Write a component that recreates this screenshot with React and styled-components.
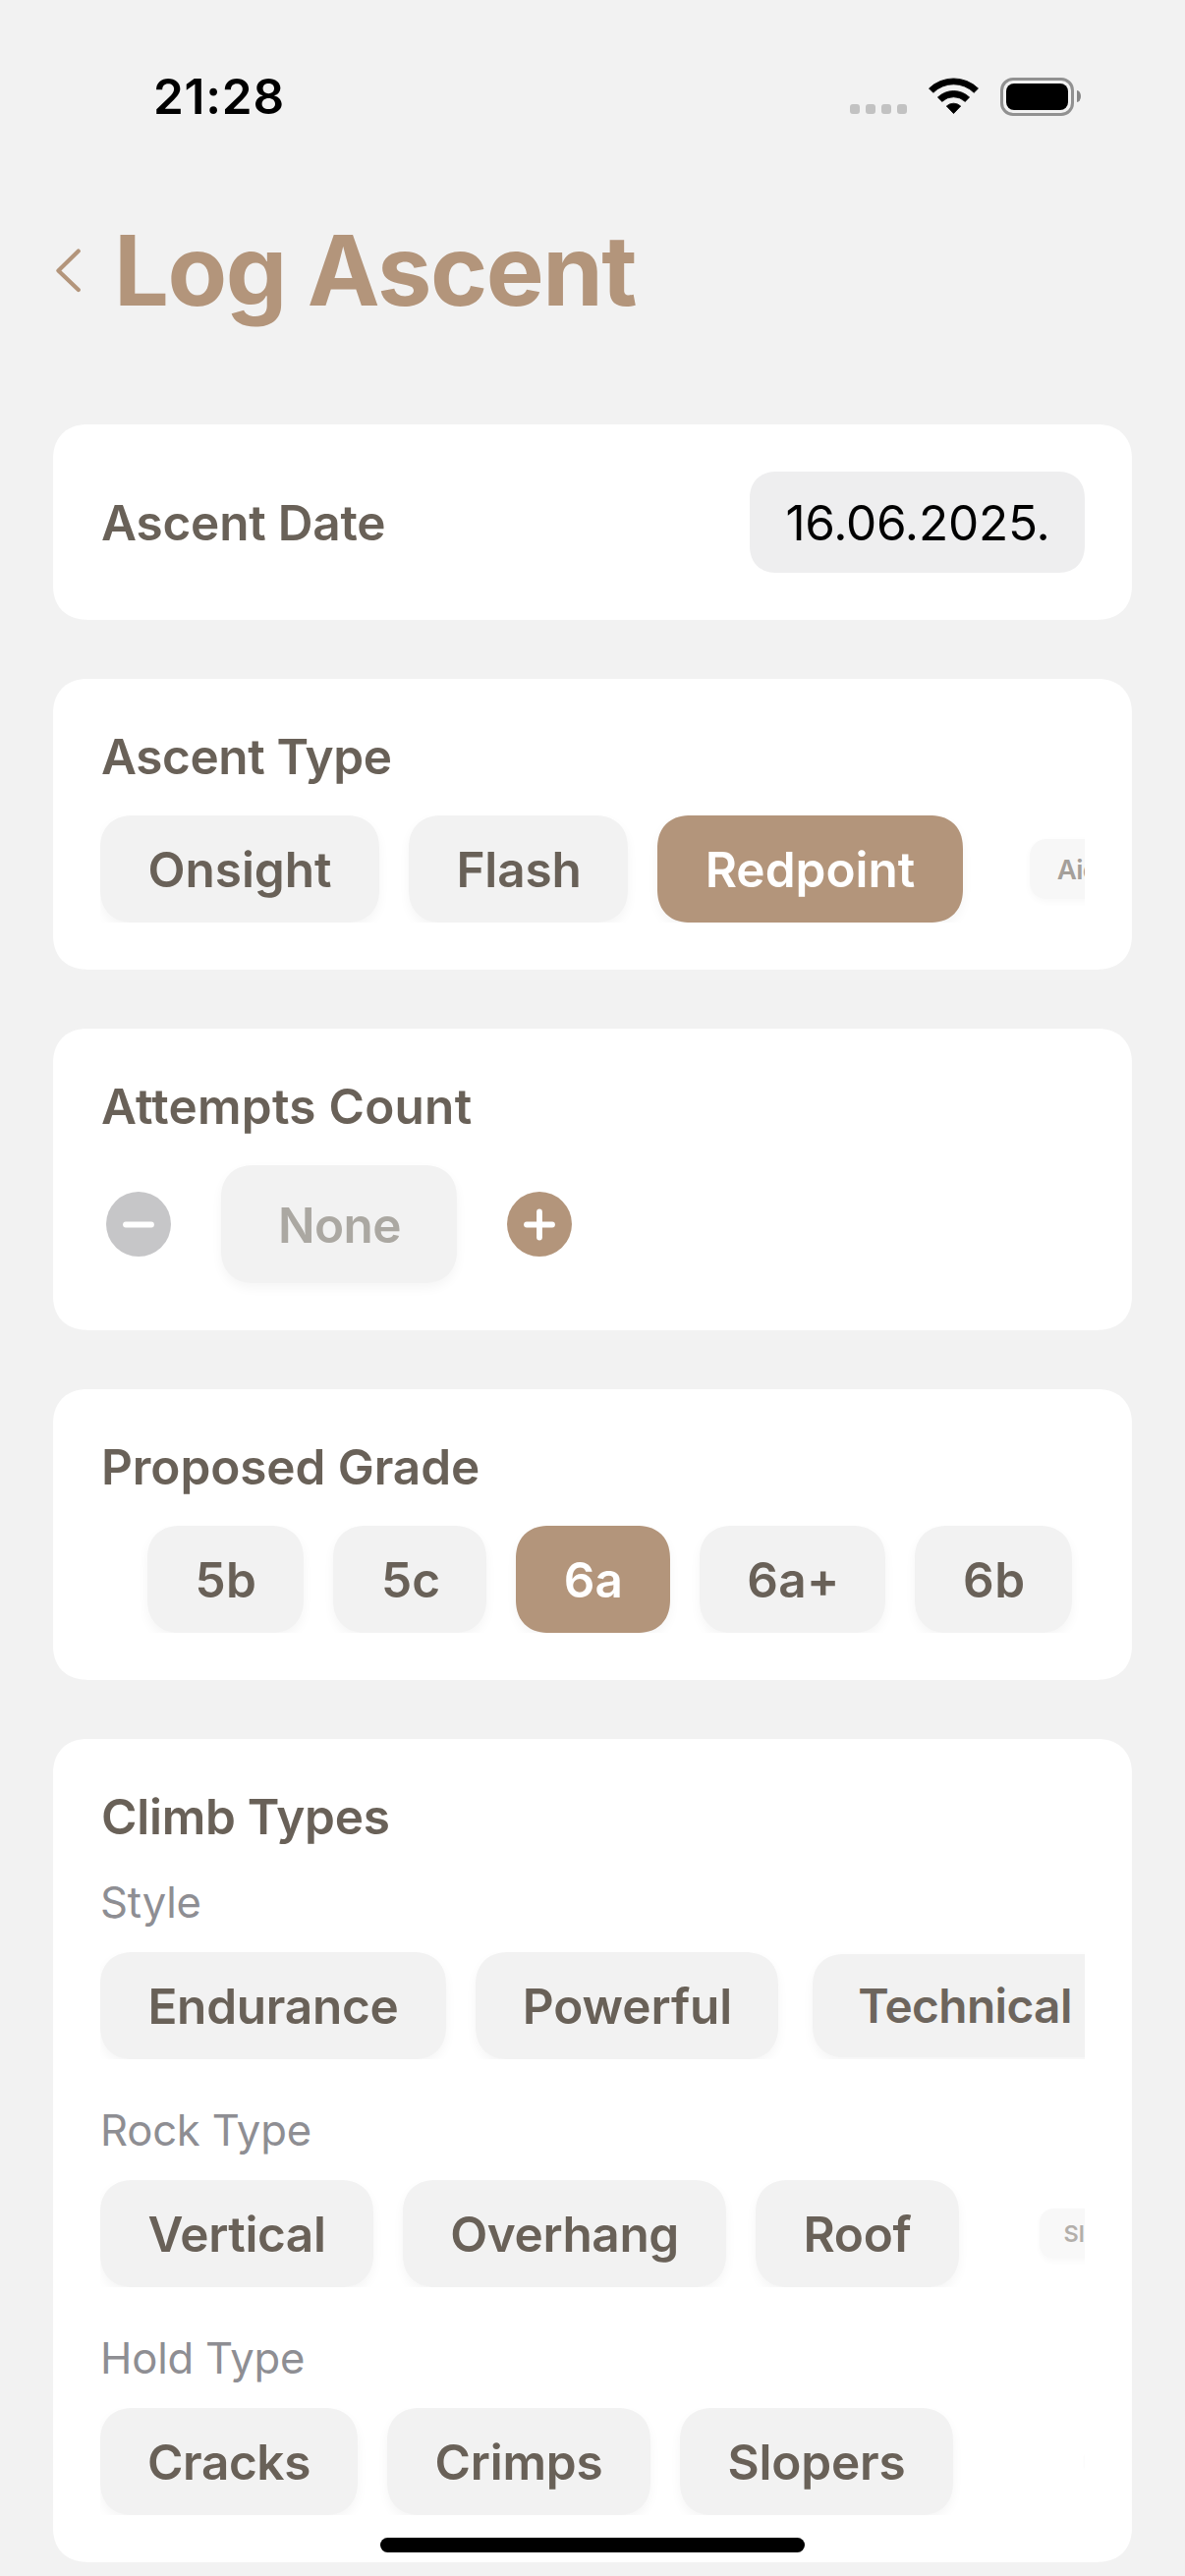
import React from "react";
import styled, { createGlobalStyle } from "styled-components";

const color = {
  page: "#f2f2f2",
  card: "#ffffff",
  chip: "#f2f2f2",
  text: "#696158",
  accent: "#b3957b",
  label: "#8e8e93",
  disabled: "#c6c6c8",
};

const GlobalStyle = createGlobalStyle`
  *, *::before, *::after { box-sizing: border-box; }
  body {
    margin: 0;
    background: ${color.page};
    font-family: Inter, "Liberation Sans", sans-serif;
    -webkit-font-smoothing: antialiased;
  }
`;

const Screen = styled.div`
  position: relative;
  display: flex;
  flex-direction: column;
  width: 1206px;
  height: 2622px;
  overflow: hidden;
  background: ${color.page};
`;

const StatusBar = styled.header`
  display: flex;
  align-items: center;
  justify-content: space-between;
  height: 196px;
  padding: 0 106px 0 156px;
`;

const Clock = styled.span`
  font-size: 49.5px;
  font-weight: 600;
  line-height: 60px;
  letter-spacing: 0.77px;
  color: #000;
`;

const StatusIcons = styled.div`
  display: flex;
  align-items: center;
  gap: 22px;
`;

const SignalDots = styled.div`
  display: flex;
  gap: 6px;
  margin-top: 26px;
`;

const SignalDot = styled.i`
  width: 10px;
  height: 10px;
  border-radius: 3px;
  background: #c2c2c2;
`;

const Battery = styled.div`
  display: flex;
  align-items: center;
  gap: 3px;
`;

const BatteryShell = styled.div`
  width: 75px;
  height: 39px;
  padding: 3px;
  border: 3px solid #919191;
  border-radius: 13px;
`;

const BatteryLevel = styled.div`
  height: 27px;
  border-radius: 8px;
  background: #000;
`;

const BatteryTip = styled.div`
  width: 4px;
  height: 12px;
  border-radius: 0 4px 4px 0 / 0 6px 6px 0;
  background: #868686;
`;

const TitleRow = styled.div`
  display: flex;
  align-items: center;
  gap: 31px;
  height: 158px;
  padding-left: 54px;
`;

const BackButton = styled.button`
  display: flex;
  padding: 0;
  border: 0;
  background: none;
  color: ${color.accent};
`;

const Title = styled.h1`
  margin: 0;
  font-size: 99px;
  font-weight: 700;
  line-height: 120px;
  letter-spacing: -1.5px;
  color: ${color.accent};
`;

const Form = styled.main`
  display: flex;
  flex-direction: column;
  gap: 60px;
  padding: 78px 54px 0;
`;

const Card = styled.section`
  display: flex;
  flex-direction: column;
  gap: 29px;
  padding: 48px;
  border-radius: 36px;
  corner-shape: superellipse(1.2);
  background: ${color.card};
`;

const SplitRow = styled.div`
  display: flex;
  align-items: center;
  justify-content: space-between;
`;

const Heading = styled.h2`
  margin: 0;
  padding-left: 1px;
  font-size: 49.5px;
  font-weight: 600;
  line-height: 62px;
  letter-spacing: ${(p) => p.$track ?? -0.2}px;
  color: ${color.text};
`;

const DateField = styled.div`
  display: flex;
  align-items: center;
  justify-content: center;
  width: 341px;
  height: 103px;
  padding-left: 1px;
  border-radius: 28px;
  corner-shape: superellipse(1.2);
  background: #eeeeef;
  font-size: 49.5px;
  letter-spacing: -0.2px;
  color: #000;
`;

const ChipStrip = styled.div`
  display: flex;
  align-items: center;
  gap: 30px;
  height: 109px;
  padding-left: ${(p) => p.$inset ?? 0}px;
  overflow: hidden;
`;

const Chip = styled.button`
  flex: none;
  display: flex;
  align-items: center;
  justify-content: center;
  width: ${(p) => p.$width}px;
  height: ${(p) => 109 * (p.$scale ?? 1)}px;
  margin-left: ${(p) => p.$offset ?? 0}px;
  padding: 2px 0 0 ${(p) => p.$nudge ?? 0}px;
  border: 0;
  border-radius: ${(p) => 34 * (p.$scale ?? 1)}px;
  corner-shape: superellipse(1.2);
  background: ${(p) => (p.$selected ? color.accent : color.chip)};
  box-shadow: 0 ${(p) => 5 * (p.$scale ?? 1)}px ${(p) => 12 * (p.$scale ?? 1)}px rgba(0, 0, 0, 0.045);
  opacity: ${(p) => p.$fade ?? 1};
  font-family: inherit;
  font-size: ${(p) => 49.5 * (p.$scale ?? 1)}px;
  font-weight: 600;
  line-height: 1.2;
  letter-spacing: ${(p) => p.$track ?? -0.2}px;
  white-space: nowrap;
  color: ${(p) => (p.$selected ? "#fff" : color.text)};
`;

const Stepper = styled.div`
  display: flex;
  align-items: center;
  gap: 51px;
  padding-left: 6px;
`;

const StepButton = styled.button`
  display: flex;
  align-items: center;
  justify-content: center;
  width: 66px;
  height: 66px;
  padding: 0;
  border: 0;
  border-radius: 50%;
  background: ${(p) => (p.disabled ? color.disabled : color.accent)};
  color: #fff;
`;

const CountField = styled.div`
  display: flex;
  align-items: center;
  justify-content: center;
  width: 240px;
  height: 120px;
  padding: 1px 0 0 1px;
  border-radius: 34px;
  corner-shape: superellipse(1.2);
  background: ${color.chip};
  box-shadow: 0 5px 12px rgba(0, 0, 0, 0.045);
  font-size: 49.5px;
  font-weight: 600;
  letter-spacing: -0.6px;
  color: #aba8a2;
`;

const Groups = styled.div`
  display: flex;
  flex-direction: column;
  gap: 45px;
`;

const Group = styled.div`
  display: flex;
  flex-direction: column;
  gap: 24px;
`;

const GroupLabel = styled.h3`
  margin: 0;
  padding-top: 1px;
  height: 54px;
  font-size: 43.6px;
  font-weight: 400;
  line-height: 54px;
  letter-spacing: -0.2px;
  color: ${color.label};
`;

const HomeIndicator = styled.div`
  position: absolute;
  left: 387px;
  bottom: 24px;
  width: 432px;
  height: 15px;
  border-radius: 8px;
  background: #000;
`;

const WifiIcon = () => (
  <svg width="51" height="38" viewBox="0 0 51 38" fill="#000" stroke="#000" strokeWidth="0.8" strokeLinejoin="round">
    <path d="M0.5 11 A36 36 0 0 1 50.5 11 L46.2 15.3 A29.5 29.5 0 0 0 4.8 15.3 Z" />
    <path d="M9.4 20 A23.2 23.2 0 0 1 41.6 20 L37.2 24.4 A17 17 0 0 0 13.8 24.4 Z" />
    <path d="M18.3 29 A10.6 10.6 0 0 1 32.7 29 L25.5 36.6 Z" />
  </svg>
);

const ChevronIcon = () => (
  <svg width="31" height="48" viewBox="0 0 31 48" fill="none" stroke="currentColor" strokeWidth="4.2" strokeLinecap="round" strokeLinejoin="round">
    <path d="M25.8 4.6 L5.4 24.4 L25.8 44" />
  </svg>
);

const StepIcon = ({ plus }) => (
  <svg width="66" height="66" viewBox="0 0 66 66" stroke="currentColor" strokeWidth="5.8" strokeLinecap="round">
    <path d="M20 33.5 H46" />
    {plus && <path d="M33 20.5 V46.5" />}
  </svg>
);

const ascentTypes = [
  { name: "Onsight", width: 284, track: 0 },
  { name: "Flash", width: 223, track: -0.15, nudge: 1 },
  { name: "Redpoint", width: 311, track: 0, selected: true },
  { name: "Aid", width: 98, track: -0.8, scale: 0.56, fade: 0.6, offset: 38 },
];

const grades = [
  { name: "5b", width: 159, track: 0.6, nudge: 1 },
  { name: "5c", width: 156, track: 0, nudge: 2 },
  { name: "6a", width: 157, track: 0.3, nudge: 1, selected: true },
  { name: "6a+", width: 189, track: 0.4, nudge: 2 },
  { name: "6b", width: 160, track: 0.6, nudge: 2 },
];

const climbGroups = [
  {
    label: "Style",
    options: [
      { name: "Endurance", width: 352, track: -0.25 },
      { name: "Powerful", width: 308, track: -0.1, nudge: 1 },
      { name: "Technical", width: 309, track: -0.6, scale: 0.965, fade: 0.97, offset: 5, nudge: 1 },
    ],
  },
  {
    label: "Rock Type",
    options: [
      { name: "Vertical", width: 278, track: -0.4 },
      { name: "Overhang", width: 329, track: -0.4 },
      { name: "Roof", width: 207, track: -0.3 },
      { name: "Slab", width: 98, scale: 0.475, fade: 0.5, offset: 52 },
    ],
  },
  {
    label: "Hold Type",
    options: [
      { name: "Cracks", width: 262, track: -0.4 },
      { name: "Crimps", width: 268, track: -0.2 },
      { name: "Slopers", width: 278, track: -0.2 },
      { name: "", width: 30, scale: 0.16, fade: 0.3, offset: 103 },
    ],
  },
];

const Chips = ({ options, inset }) => (
  <ChipStrip $inset={inset}>
    {options.map((o) => (
      <Chip
        key={o.name}
        type="button"
        $width={o.width}
        $track={o.track}
        $selected={o.selected}
        $scale={o.scale}
        $fade={o.fade}
        $offset={o.offset}
        $nudge={o.nudge}
      >
        {o.name}
      </Chip>
    ))}
  </ChipStrip>
);

export default function App() {
  return (
    <>
      <GlobalStyle />
      <Screen>
        <StatusBar>
          <Clock>21:28</Clock>
          <StatusIcons>
            <SignalDots>
              <SignalDot />
              <SignalDot />
              <SignalDot />
              <SignalDot />
            </SignalDots>
            <WifiIcon />
            <Battery>
              <BatteryShell>
                <BatteryLevel />
              </BatteryShell>
              <BatteryTip />
            </Battery>
          </StatusIcons>
        </StatusBar>
        <TitleRow>
          <BackButton type="button" aria-label="Back">
            <ChevronIcon />
          </BackButton>
          <Title>Log Ascent</Title>
        </TitleRow>
        <Form>
          <Card>
            <SplitRow>
              <Heading>Ascent Date</Heading>
              <DateField>16.06.2025.</DateField>
            </SplitRow>
          </Card>
          <Card>
            <Heading $track={-0.4}>Ascent Type</Heading>
            <Chips options={ascentTypes} />
          </Card>
          <Card>
            <Heading $track={0.25}>Attempts Count</Heading>
            <Stepper>
              <StepButton type="button" aria-label="Decrease" disabled>
                <StepIcon />
              </StepButton>
              <CountField>None</CountField>
              <StepButton type="button" aria-label="Increase">
                <StepIcon plus />
              </StepButton>
            </Stepper>
          </Card>
          <Card>
            <Heading $track={-0.08}>Proposed Grade</Heading>
            <Chips options={grades} inset={48} />
          </Card>
          <Card>
            <Heading $track={-0.25}>Climb Types</Heading>
            <Groups>
              {climbGroups.map((g) => (
                <Group key={g.label}>
                  <GroupLabel>{g.label}</GroupLabel>
                  <Chips options={g.options} />
                </Group>
              ))}
            </Groups>
          </Card>
        </Form>
        <HomeIndicator />
      </Screen>
    </>
  );
}
